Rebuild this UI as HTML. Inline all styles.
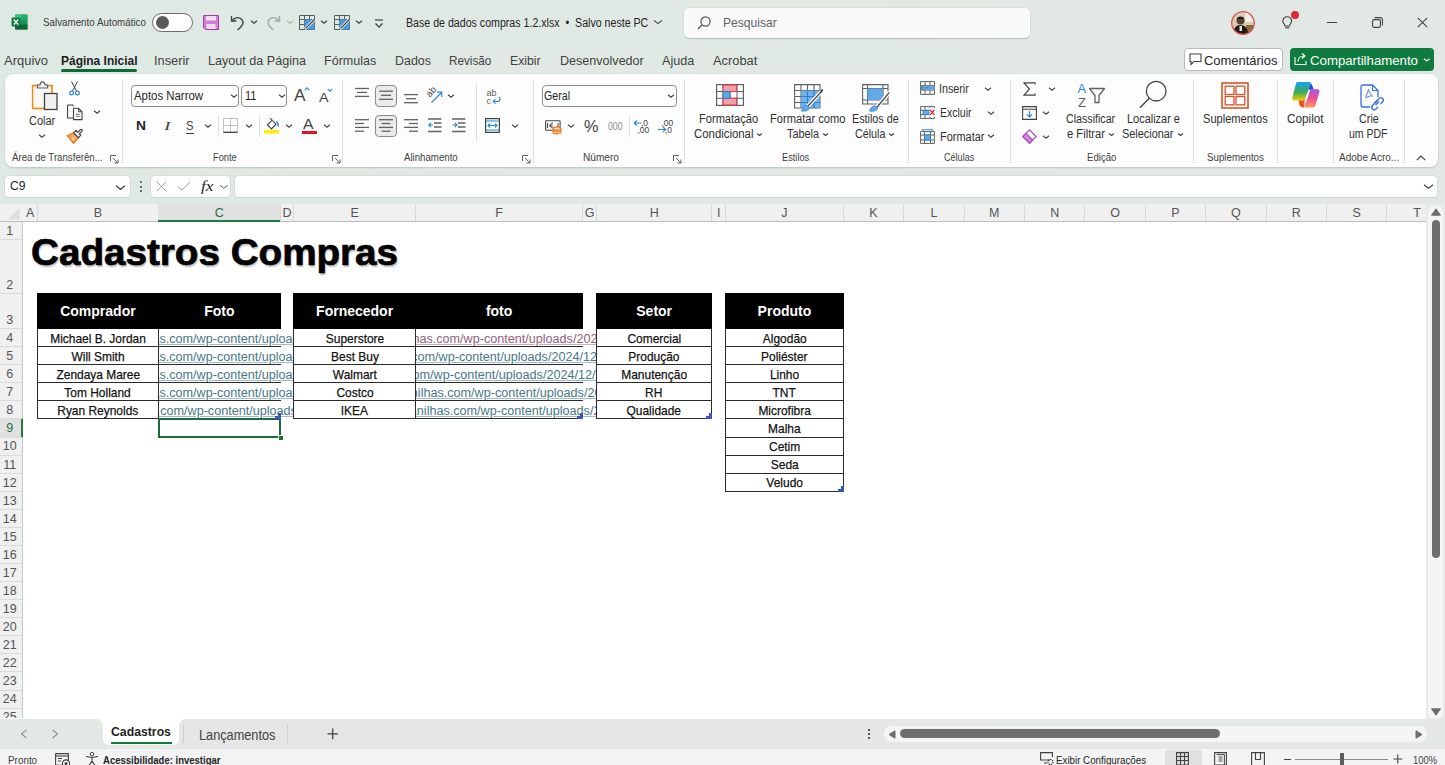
<!DOCTYPE html><html><head><meta charset="utf-8"><style>*{margin:0;padding:0;box-sizing:border-box}
html,body{width:1445px;height:765px;overflow:hidden}
body{position:relative;background:#e0e9e4;font-family:"Liberation Sans",sans-serif;color:#242424}
.a{position:absolute}
.t{position:absolute;white-space:nowrap;line-height:1}
svg{position:absolute;overflow:visible}
.ch{top:207px;font-size:12.5px;text-align:center}
.rh{left:0;width:19.5px;font-size:12.5px;text-align:center}
.ht{font-size:14px;font-weight:bold;color:#fff;text-align:center}
.ht span,.cell span{display:inline-block}
.cell{font-size:13.5px;color:#111;text-align:center;-webkit-text-stroke:0.25px #111}
.cell span{transform:scaleX(0.885)}
.lnk{font-size:12.3px;text-decoration:underline;text-underline-offset:1px}
</style></head><body>
<div class="a" style="left:0;top:0;width:1445px;height:204px;background:linear-gradient(90deg,#dfe9e3 0%,#e0e9e4 45%,#e3e8e6 100%)"></div>
<svg style="left:11px;top:14px" width="17" height="16" viewBox="0 0 17 16"><rect x="4" y="0.5" width="12.5" height="15" rx="1.2" fill="#21a366"/><rect x="4" y="0.5" width="12.5" height="5" fill="#33c481"/><rect x="4" y="10.5" width="12.5" height="5" fill="#185c37"/><rect x="10" y="0.5" width="6.5" height="15" fill="#107c41" opacity="0.35"/><rect x="0.5" y="3.5" width="9" height="9" rx="1" fill="#107c41"/><path d="M2.8 5.5 L7.2 10.5 M7.2 5.5 L2.8 10.5" stroke="#fff" stroke-width="1.3"/></svg>
<div class="t" style="left:43.0px;top:17.29px;font-size:11px;color:#3b3b3b;transform:scaleX(0.8907);transform-origin:0 0;">Salvamento Automático</div>
<div class="a" style="left:152px;top:12.5px;width:41px;height:19.5px;border:1px solid #6b6b6b;border-radius:10px;background:#fff"></div>
<div class="a" style="left:155.5px;top:15.5px;width:13.5px;height:13.5px;border-radius:50%;background:#5c5c5c"></div>
<svg style="left:203px;top:15px" width="16" height="15" viewBox="0 0 16 15"><path d="M0.5 0.5 H15.5 V14.5 H2.5 L0.5 12.5 Z" fill="#d27fd4" /><rect x="3" y="0.5" width="10" height="5" fill="#f3d9f2"/><rect x="3.5" y="9" width="9" height="5.5" fill="#f3d9f2"/><path d="M0.5 0.5 H15.5 V14.5 H2.5 L0.5 12.5 Z" fill="none" stroke="#a13ba0" stroke-width="1"/></svg>
<svg style="left:230px;top:15px" width="15" height="16" viewBox="0 0 15 16"><path d="M1.5 1 V6 H6.5" fill="none" stroke="#424242" stroke-width="1.3"/><path d="M1.8 5.8 C4 2.5 9 1.5 11.8 4.5 C14.5 7.5 12.5 11 7.5 15" fill="none" stroke="#424242" stroke-width="1.3"/></svg>
<svg style="left:250px;top:19px" width="8" height="6" viewBox="0 0 8 6"><path d="M1 1.80 L4.00 4.20 L7.00 1.80" fill="none" stroke="#424242" stroke-width="1.3"/></svg>
<svg style="left:266px;top:15px" width="15" height="16" viewBox="0 0 15 16"><path d="M13.5 1 V6 H8.5" fill="none" stroke="#a8a8a8" stroke-width="1.3"/><path d="M13.2 5.8 C11 2.5 6 1.5 3.2 4.5 C0.5 7.5 2.5 11 7.5 15" fill="none" stroke="#a8a8a8" stroke-width="1.3"/></svg>
<svg style="left:286px;top:19px" width="8" height="6" viewBox="0 0 8 6"><path d="M1 1.80 L4.00 4.20 L7.00 1.80" fill="none" stroke="#b5b5b5" stroke-width="1.1"/></svg>
<svg style="left:299px;top:15px" width="16" height="15" viewBox="0 0 16 15"><path d="M0.5 0.5 H15.5 V14.5 H0.5 Z M0.5 4.5 H15.5 M0.5 9.5 H15.5 M5.5 0.5 V14.5 M10.5 0.5 V14.5" fill="none" stroke="#5a5a5a" stroke-width="1"/><rect x="5.5" y="4.5" width="10" height="10" fill="#4a9be0"/><path d="M6 14 L15 5" stroke="#fff" stroke-width="2.6"/><path d="M6.5 13.5 L15 5" stroke="#3b3b3b" stroke-width="1.1"/></svg>
<svg style="left:320px;top:19px" width="8" height="6" viewBox="0 0 8 6"><path d="M1 1.80 L4.00 4.20 L7.00 1.80" fill="none" stroke="#424242" stroke-width="1.3"/></svg>
<svg style="left:334px;top:15px" width="16" height="15" viewBox="0 0 16 15"><path d="M0.5 0.5 H15.5 V14.5 H0.5 Z M0.5 4.5 H15.5 M0.5 9.5 H15.5 M5.5 0.5 V14.5 M10.5 0.5 V14.5" fill="none" stroke="#5a5a5a" stroke-width="1"/><rect x="5.5" y="4.5" width="10" height="10" fill="#4a9be0"/><path d="M6 14 L15 5" stroke="#fff" stroke-width="2.6"/><path d="M6.5 13.5 L15 5" stroke="#3b3b3b" stroke-width="1.1"/></svg>
<svg style="left:355px;top:19px" width="8" height="6" viewBox="0 0 8 6"><path d="M1 1.80 L4.00 4.20 L7.00 1.80" fill="none" stroke="#424242" stroke-width="1.3"/></svg>
<svg style="left:374px;top:17.5px" width="10" height="12" viewBox="0 0 10 12"><path d="M1 2 H9" stroke="#424242" stroke-width="1.2"/><path d="M1.5 5.5 L5 9 L8.5 5.5" fill="none" stroke="#424242" stroke-width="1.3"/></svg>
<div class="t" style="left:406.3px;top:17.34px;font-size:12px;color:#242424;transform:scaleX(0.8853);transform-origin:0 0;">Base de dados compras 1.2.xlsx&nbsp; •&nbsp; Salvo neste PC</div>
<svg style="left:653px;top:17.5px" width="10" height="8" viewBox="0 0 10 8"><path d="M1 2.40 L5.00 5.60 L9.00 2.40" fill="none" stroke="#424242" stroke-width="1.2"/></svg>
<div class="a" style="left:684px;top:8px;width:346px;height:29.5px;background:#fafafa;border-radius:5px;box-shadow:0 1px 1px rgba(0,0,0,.16),0 0 0 .5px rgba(0,0,0,.06)"></div>
<svg style="left:697px;top:16px" width="14" height="14" viewBox="0 0 14 14"><circle cx="8.5" cy="5.5" r="4.6" fill="none" stroke="#555" stroke-width="1.2"/><path d="M5.2 8.8 L1 13" stroke="#555" stroke-width="1.3"/></svg>
<div class="t" style="left:722.6px;top:16.20px;font-size:13px;color:#616161;transform:scaleX(0.9286);transform-origin:0 0;">Pesquisar</div>
<svg style="left:1231px;top:10.5px" width="24" height="24" viewBox="0 0 24 24"><defs><clipPath id="avc"><circle cx="12" cy="12" r="11"/></clipPath></defs><g clip-path="url(#avc)"><rect width="24" height="24" fill="#d9cdb4"/><rect x="14" y="2" width="8" height="9" fill="#f2eee6"/><rect x="15" y="14" width="7" height="8" fill="#8a6a3a"/><path d="M2 24 C2 17 5 14 9.5 14 C14 14 17 17 17 24 Z" fill="#1e1a18"/><circle cx="9.5" cy="9.5" r="4" fill="#5a4033"/><path d="M6 8 C6 5 13 5 13 8" fill="#231c18"/><rect x="8.5" y="15" width="2.5" height="5" fill="#e8e2da"/></g><circle cx="12" cy="12" r="11.3" fill="none" stroke="#d9534f" stroke-width="1.3"/></svg>
<svg style="left:1282px;top:16px" width="11" height="14" viewBox="0 0 11 14"><path d="M5.2 0.8 C2.5 0.8 0.8 2.8 0.8 5 C0.8 7 2.5 8 3 10 H7.4 C7.9 8 9.6 7 9.6 5 C9.6 2.8 7.9 0.8 5.2 0.8 Z" fill="none" stroke="#424242" stroke-width="1.1"/><path d="M3.3 11.8 H7.1" stroke="#424242" stroke-width="1.2"/></svg>
<div class="a" style="left:1291px;top:11.3px;width:7.6px;height:7.6px;border-radius:50%;background:#dd2c36"></div>
<div class="a" style="left:1327px;top:21.5px;width:10px;height:1.2px;background:#424242"></div>
<svg style="left:1372px;top:17px" width="11" height="11" viewBox="0 0 11 11"><rect x="0.6" y="2.6" width="7.8" height="7.8" rx="1.5" fill="none" stroke="#424242" stroke-width="1.1"/><path d="M2.6 0.6 H8.4 A2 2 0 0 1 10.4 2.6 V8.4" fill="none" stroke="#424242" stroke-width="1.1"/></svg>
<svg style="left:1417px;top:17px" width="11" height="11" viewBox="0 0 11 11"><path d="M0.8 0.8 L10.2 10.2 M10.2 0.8 L0.8 10.2" stroke="#424242" stroke-width="1.1"/></svg>
<div class="t" style="left:4.0px;top:53.80px;font-size:13px;color:#424242;transform:scaleX(0.9979);transform-origin:0 0;">Arquivo</div>
<div class="t" style="left:60.5px;top:53.80px;font-size:13px;color:#1f1f1f;font-weight:bold;transform:scaleX(0.9208);transform-origin:0 0;">Página Inicial</div>
<div class="t" style="left:153.7px;top:53.80px;font-size:13px;color:#424242;transform:scaleX(0.9827);transform-origin:0 0;">Inserir</div>
<div class="t" style="left:207.5px;top:53.80px;font-size:13px;color:#424242;transform:scaleX(0.9690);transform-origin:0 0;">Layout da Página</div>
<div class="t" style="left:324.2px;top:53.80px;font-size:13px;color:#424242;transform:scaleX(0.9652);transform-origin:0 0;">Fórmulas</div>
<div class="t" style="left:394.6px;top:53.80px;font-size:13px;color:#424242;transform:scaleX(0.9576);transform-origin:0 0;">Dados</div>
<div class="t" style="left:449.2px;top:53.80px;font-size:13px;color:#424242;transform:scaleX(0.9024);transform-origin:0 0;">Revisão</div>
<div class="t" style="left:510.0px;top:53.80px;font-size:13px;color:#424242;transform:scaleX(0.9411);transform-origin:0 0;">Exibir</div>
<div class="t" style="left:560.0px;top:53.80px;font-size:13px;color:#424242;transform:scaleX(0.9660);transform-origin:0 0;">Desenvolvedor</div>
<div class="t" style="left:662.4px;top:53.80px;font-size:13px;color:#424242;transform:scaleX(0.9710);transform-origin:0 0;">Ajuda</div>
<div class="t" style="left:713.0px;top:53.80px;font-size:13px;color:#424242;transform:scaleX(0.9886);transform-origin:0 0;">Acrobat</div>
<div class="a" style="left:60.5px;top:69.3px;width:76.5px;height:2.4px;border-radius:1.5px;background:#0e6b35"></div>
<div class="a" style="left:1184px;top:48px;width:98.5px;height:22.5px;background:#fff;border:1px solid #b8b8b8;border-radius:4px"></div>
<svg style="left:1189px;top:53px" width="13" height="13" viewBox="0 0 13 13"><path d="M1 1 H12 V8.5 H5 L2 11.5 V8.5 H1 Z" fill="none" stroke="#424242" stroke-width="1.1"/></svg>
<div class="t" style="left:1203.6px;top:53.50px;font-size:13px;color:#242424;transform:scaleX(0.9957);transform-origin:0 0;">Comentários</div>
<div class="a" style="left:1290px;top:48px;width:144px;height:22.5px;background:#0f7b3f;border-radius:4px"></div>
<svg style="left:1294px;top:52px" width="14" height="14" viewBox="0 0 14 14"><path d="M1 5 V12.5 H12 V9" fill="none" stroke="#fff" stroke-width="1.1"/><path d="M4 9.5 C4 6 6.5 4 10 4 M8 1.5 L11 4 L8 6.5" fill="none" stroke="#fff" stroke-width="1.1"/></svg>
<div class="t" style="left:1310.0px;top:53.50px;font-size:13px;color:#ffffff;transform:scaleX(1.0165);transform-origin:0 0;">Compartilhamento</div>
<svg style="left:1423.2px;top:56.7px" width="7.6" height="5.6" viewBox="0 0 7.6 5.6"><path d="M1 1.68 L3.80 3.92 L6.60 1.68" fill="none" stroke="#ffffff" stroke-width="1.2"/></svg>
<div class="a" style="left:5px;top:74px;width:1432.5px;height:93px;background:#fdfdfd;border-radius:8px;box-shadow:0 1px 2px rgba(0,0,0,.14),0 0 0 .5px rgba(0,0,0,.05)"></div>
<div class="a" style="left:122.0px;top:80px;width:1px;height:83px;background:#e0e0e0"></div>
<div class="a" style="left:342.0px;top:80px;width:1px;height:83px;background:#e0e0e0"></div>
<div class="a" style="left:533.0px;top:80px;width:1px;height:83px;background:#e0e0e0"></div>
<div class="a" style="left:684.2px;top:80px;width:1px;height:83px;background:#e0e0e0"></div>
<div class="a" style="left:908.1px;top:80px;width:1px;height:83px;background:#e0e0e0"></div>
<div class="a" style="left:1009.8px;top:80px;width:1px;height:83px;background:#e0e0e0"></div>
<div class="a" style="left:1193.2px;top:80px;width:1px;height:83px;background:#e0e0e0"></div>
<div class="a" style="left:1277.1px;top:80px;width:1px;height:83px;background:#e0e0e0"></div>
<div class="a" style="left:1332.5px;top:80px;width:1px;height:83px;background:#e0e0e0"></div>
<div class="a" style="left:1403.9px;top:80px;width:1px;height:83px;background:#e0e0e0"></div>
<div class="t" style="left:12.2px;top:153.23px;font-size:10px;color:#3d3d3d;transform:scaleX(0.9664);transform-origin:0 0;">Área de Transferên...</div>
<svg style="left:110px;top:155px" width="9" height="9" viewBox="0 0 9 9"><path d="M0.5 6 V0.5 H6" fill="none" stroke="#616161" stroke-width="1"/><path d="M3 3 L8 8 M4.5 8 H8 V4.5" fill="none" stroke="#616161" stroke-width="1"/></svg>
<div class="t" style="left:212.7px;top:153.23px;font-size:10px;color:#3d3d3d;transform:scaleX(0.9305);transform-origin:0 0;">Fonte</div>
<svg style="left:332px;top:155px" width="9" height="9" viewBox="0 0 9 9"><path d="M0.5 6 V0.5 H6" fill="none" stroke="#616161" stroke-width="1"/><path d="M3 3 L8 8 M4.5 8 H8 V4.5" fill="none" stroke="#616161" stroke-width="1"/></svg>
<div class="t" style="left:403.7px;top:153.23px;font-size:10px;color:#3d3d3d;transform:scaleX(0.9659);transform-origin:0 0;">Alinhamento</div>
<svg style="left:522px;top:155px" width="9" height="9" viewBox="0 0 9 9"><path d="M0.5 6 V0.5 H6" fill="none" stroke="#616161" stroke-width="1"/><path d="M3 3 L8 8 M4.5 8 H8 V4.5" fill="none" stroke="#616161" stroke-width="1"/></svg>
<div class="t" style="left:583.0px;top:153.23px;font-size:10px;color:#3d3d3d;transform:scaleX(1.0123);transform-origin:0 0;">Número</div>
<svg style="left:673px;top:155px" width="9" height="9" viewBox="0 0 9 9"><path d="M0.5 6 V0.5 H6" fill="none" stroke="#616161" stroke-width="1"/><path d="M3 3 L8 8 M4.5 8 H8 V4.5" fill="none" stroke="#616161" stroke-width="1"/></svg>
<div class="t" style="left:782.4px;top:153.23px;font-size:10px;color:#3d3d3d;transform:scaleX(0.9235);transform-origin:0 0;">Estilos</div>
<div class="t" style="left:943.8px;top:153.23px;font-size:10px;color:#3d3d3d;transform:scaleX(0.9057);transform-origin:0 0;">Células</div>
<div class="t" style="left:1086.6px;top:153.23px;font-size:10px;color:#3d3d3d;transform:scaleX(0.9615);transform-origin:0 0;">Edição</div>
<div class="t" style="left:1206.7px;top:153.23px;font-size:10px;color:#3d3d3d;transform:scaleX(0.9747);transform-origin:0 0;">Suplementos</div>
<div class="t" style="left:1338.6px;top:153.23px;font-size:10px;color:#3d3d3d;transform:scaleX(1.0023);transform-origin:0 0;">Adobe Acro...</div>
<svg style="left:1416px;top:155px" width="10" height="6" viewBox="0 0 10 6"><path d="M0.8 5.2 L5 1 L9.2 5.2" fill="none" stroke="#424242" stroke-width="1.2"/></svg>
<div class="a" style="left:5px;top:176px;width:125px;height:21px;background:#fff;border-radius:4px;box-shadow:0 0 0 .6px #d0d0d0, 0 .6px 1px rgba(0,0,0,.08)"></div>
<div class="t" style="left:10.0px;top:180.42px;font-size:12.5px;color:#242424;transform:scaleX(0.9697);transform-origin:0 0;">C9</div>
<svg style="left:114.5px;top:182.5px" width="11.0" height="9.0" viewBox="0 0 11.0 9.0"><path d="M1 2.70 L5.50 6.30 L10.00 2.70" fill="none" stroke="#424242" stroke-width="1.3"/></svg>
<div class="a" style="left:139.5px;top:181px;width:2.4px;height:2.4px;border-radius:50%;background:#424242"></div>
<div class="a" style="left:139.5px;top:185.5px;width:2.4px;height:2.4px;border-radius:50%;background:#424242"></div>
<div class="a" style="left:139.5px;top:190px;width:2.4px;height:2.4px;border-radius:50%;background:#424242"></div>
<div class="a" style="left:151px;top:176px;width:79px;height:21px;background:#fff;border-radius:4px;box-shadow:0 0 0 .6px #d0d0d0, 0 .6px 1px rgba(0,0,0,.08)"></div>
<svg style="left:156px;top:181px" width="11" height="11" viewBox="0 0 11 11"><path d="M0.8 0.8 L10.2 10.2 M10.2 0.8 L0.8 10.2" stroke="#a0a0a0" stroke-width="1"/></svg>
<svg style="left:177px;top:181px" width="14" height="10" viewBox="0 0 14 10"><path d="M0.8 5.5 L4.8 9.2 L13.2 0.8" fill="none" stroke="#a0a0a0" stroke-width="1"/></svg>
<div class="t" style="left:201.0px;top:179.65px;font-size:14px;color:#242424;transform:scaleX(1.2396);transform-origin:0 0;font-family:'Liberation Serif',serif"><i>fx</i></div>
<svg style="left:219.2px;top:183.2px" width="9.6" height="7.6" viewBox="0 0 9.6 7.6"><path d="M1 2.28 L4.80 5.32 L8.60 2.28" fill="none" stroke="#555" stroke-width="1"/></svg>
<div class="a" style="left:235px;top:176px;width:1202px;height:21px;background:#fff;border-radius:4px;box-shadow:0 0 0 .6px #d0d0d0, 0 .6px 1px rgba(0,0,0,.08)"></div>
<svg style="left:1422.5px;top:181.5px" width="11.0" height="9.0" viewBox="0 0 11.0 9.0"><path d="M1 2.70 L5.50 6.30 L10.00 2.70" fill="none" stroke="#424242" stroke-width="1.2"/></svg>
<svg style="left:31px;top:81px" width="27" height="30" viewBox="0 0 27 30"><path d="M2 5 H7 M17 5 H21 V16" fill="none" stroke="#e8891a" stroke-width="1.3"/><path d="M1.5 4.5 H21 V27.5 H1.5 Z" fill="#fbe8cf" stroke="#e8891a" stroke-width="1.3"/><rect x="3.5" y="6.5" width="15.5" height="19" fill="#fafafa"/><path d="M6.5 7 V4 H9 C9 1.5 10.5 0.8 11.5 0.8 C12.5 0.8 14 1.5 14 4 H16.5 V7 Z" fill="#f5f5f5" stroke="#616161" stroke-width="1.2"/><rect x="13.5" y="12.5" width="12.5" height="16" fill="#f0f0f0" stroke="#424242" stroke-width="1.3"/></svg>
<div class="t" style="left:28.8px;top:115.19px;font-size:12.3px;color:#303030;transform:scaleX(0.8914);transform-origin:0 0;">Colar</div>
<svg style="left:38px;top:132.5px" width="8" height="6" viewBox="0 0 8 6"><path d="M1 1.80 L4.00 4.20 L7.00 1.80" fill="none" stroke="#424242" stroke-width="1.1"/></svg>
<svg style="left:69px;top:81px" width="11" height="15" viewBox="0 0 11 15"><path d="M2.5 0.5 L7.5 10 M8.5 0.5 L3.5 10" stroke="#424242" stroke-width="1"/><circle cx="2.6" cy="12" r="1.9" fill="none" stroke="#2a8ad4" stroke-width="1.2"/><circle cx="8.4" cy="12" r="1.9" fill="none" stroke="#2a8ad4" stroke-width="1.2"/></svg>
<svg style="left:67px;top:104px" width="16" height="17" viewBox="0 0 16 17"><path d="M0.6 1 H5.5 L6.5 2 M0.6 1 V14 H6" fill="none" stroke="#424242" stroke-width="1.1"/><path d="M6.5 4.3 H11.5 L15 7.8 V15.6 H6.5 Z" fill="#fff" stroke="#424242" stroke-width="1.1"/><path d="M11.5 4.3 V7.8 H15" fill="none" stroke="#424242" stroke-width="1"/><path d="M8.8 10.3 H12.8 M8.8 12.3 H12.8" stroke="#616161" stroke-width=".9"/></svg>
<svg style="left:93px;top:109px" width="8" height="6" viewBox="0 0 8 6"><path d="M1 1.80 L4.00 4.20 L7.00 1.80" fill="none" stroke="#424242" stroke-width="1.1"/></svg>
<svg style="left:66px;top:128px" width="17" height="17" viewBox="0 0 17 17"><path d="M1.2 7.7 L7.5 4.8 L12.6 9.9 L7.5 15.3 Z" fill="#f4a65a" stroke="#e8741a" stroke-width="1.2" stroke-linejoin="round"/><path d="M5 10.5 L8.5 9 L8 12.5 Z" fill="#fde6cc"/><path d="M7.6 4.6 L10 2.4 L14.8 7.2 L12.6 9.6 Z" fill="#fff" stroke="#424242" stroke-width="1.2" stroke-linejoin="round"/><path d="M11.2 4.8 L14.2 1.8 C14.8 1.2 15.6 1.2 16 1.6 C16.4 2 16.4 2.8 15.8 3.4 L12.8 6.4" fill="#fff" stroke="#424242" stroke-width="1.2"/></svg>
<div class="a" style="left:131px;top:84.5px;width:108px;height:22px;border:1px solid #8f8f8f;border-radius:4px;background:#fff"></div>
<div class="t" style="left:133.5px;top:90.04px;font-size:12px;color:#242424;transform:scaleX(0.9493);transform-origin:0 0;">Aptos Narrow</div>
<svg style="left:229.5px;top:92.5px" width="8" height="6" viewBox="0 0 8 6"><path d="M1 1.80 L4.00 4.20 L7.00 1.80" fill="none" stroke="#424242" stroke-width="1.2"/></svg>
<div class="a" style="left:241px;top:84.5px;width:46px;height:22px;border:1px solid #8f8f8f;border-radius:4px;background:#fff"></div>
<div class="t" style="left:244.5px;top:90.04px;font-size:12px;color:#242424;transform:scaleX(0.9235);transform-origin:0 0;">11</div>
<svg style="left:277.5px;top:92.5px" width="8" height="6" viewBox="0 0 8 6"><path d="M1 1.80 L4.00 4.20 L7.00 1.80" fill="none" stroke="#424242" stroke-width="1.2"/></svg>
<div class="t" style="left:293.5px;top:87.96px;font-size:16px;color:#424242;transform:scaleX(1.0776);transform-origin:0 0;">A</div>
<svg style="left:304px;top:87px" width="6" height="4" viewBox="0 0 6 4"><path d="M0.7 3.3 L3 0.9 L5.3 3.3" fill="none" stroke="#2a8ad4" stroke-width="1.1"/></svg>
<div class="t" style="left:319.0px;top:90.50px;font-size:13px;color:#424242;transform:scaleX(1.0955);transform-origin:0 0;">A</div>
<svg style="left:327px;top:88px" width="6" height="4" viewBox="0 0 6 4"><path d="M0.7 0.8 L3 3.1 L5.3 0.8" fill="none" stroke="#2a8ad4" stroke-width="1.1"/></svg>
<div class="t" style="left:136.3px;top:119.37px;font-size:13.5px;color:#242424;font-weight:bold;transform:scaleX(1.0256);transform-origin:0 0;">N</div>
<div class="t" style="left:163.5px;top:119.37px;font-size:13.5px;color:#424242;transform:scaleX(1.4667);transform-origin:0 0;font-family:'Liberation Serif',serif;font-style:italic">I</div>
<div class="t" style="left:186.0px;top:120.22px;font-size:12.5px;color:#424242;transform:scaleX(0.8989);transform-origin:0 0;">S</div>
<div class="a" style="left:185.5px;top:132.5px;width:8.5px;height:1.1px;background:#424242"></div>
<svg style="left:203.5px;top:123px" width="8" height="6" viewBox="0 0 8 6"><path d="M1 1.80 L4.00 4.20 L7.00 1.80" fill="none" stroke="#424242" stroke-width="1.1"/></svg>
<div class="a" style="left:217.5px;top:115px;width:1px;height:22px;background:#e0e0e0"></div>
<svg style="left:223px;top:118px" width="15" height="15" viewBox="0 0 15 15"><path d="M0.5 0.5 H14.5 V14.5 H0.5 Z M7.5 0.5 V14.5 M0.5 7.5 H14.5" fill="none" stroke="#8a8a8a" stroke-width="1" stroke-dasharray="1 1"/><path d="M0.5 14.3 H14.5" stroke="#424242" stroke-width="1.3"/></svg>
<svg style="left:244.5px;top:123px" width="8" height="6" viewBox="0 0 8 6"><path d="M1 1.80 L4.00 4.20 L7.00 1.80" fill="none" stroke="#424242" stroke-width="1.1"/></svg>
<div class="a" style="left:258.5px;top:115px;width:1px;height:22px;background:#e0e0e0"></div>
<svg style="left:264px;top:117px" width="16" height="17" viewBox="0 0 16 17"><path d="M3.5 8 L8 3.2 L12 7.2 L7.5 12 Z" fill="#fff" stroke="#424242" stroke-width="1.1"/><path d="M8 3.2 L6 1" stroke="#424242" stroke-width="1.1"/><path d="M12.5 4.5 C14 6 14.5 8 14 9.5" fill="none" stroke="#2a8ad4" stroke-width="1.3"/><rect x="0" y="13" width="15" height="3.5" fill="#ffef00"/></svg>
<svg style="left:285px;top:123px" width="8" height="6" viewBox="0 0 8 6"><path d="M1 1.80 L4.00 4.20 L7.00 1.80" fill="none" stroke="#424242" stroke-width="1.1"/></svg>
<div class="t" style="left:302.5px;top:116.53px;font-size:14.5px;color:#424242;transform:scaleX(1.0856);transform-origin:0 0;">A</div>
<div class="a" style="left:302px;top:130.5px;width:15px;height:3.5px;background:#e81123"></div>
<svg style="left:323px;top:123px" width="8" height="6" viewBox="0 0 8 6"><path d="M1 1.80 L4.00 4.20 L7.00 1.80" fill="none" stroke="#424242" stroke-width="1.1"/></svg>
<svg style="left:355px;top:0px" width="14" height="200" viewBox="0 0 14 200"><path d="M0.00 88.50 H14.00" stroke="#616161" stroke-width="1.3"/><path d="M2.00 92.40 H12.00" stroke="#616161" stroke-width="1.3"/><path d="M0.00 96.40 H14.00" stroke="#616161" stroke-width="1.3"/></svg>
<div class="a" style="left:375px;top:84.5px;width:22px;height:22px;border:1px solid #8a8a8a;border-radius:4px;background:#ebebeb"></div>
<svg style="left:379px;top:0px" width="14" height="200" viewBox="0 0 14 200"><path d="M0.00 91.20 H14.00" stroke="#616161" stroke-width="1.3"/><path d="M2.00 95.30 H12.00" stroke="#616161" stroke-width="1.3"/><path d="M0.00 99.30 H14.00" stroke="#616161" stroke-width="1.3"/></svg>
<svg style="left:404px;top:0px" width="14" height="200" viewBox="0 0 14 200"><path d="M0.00 94.60 H14.00" stroke="#616161" stroke-width="1.3"/><path d="M2.00 98.70 H12.00" stroke="#616161" stroke-width="1.3"/><path d="M0.00 102.70 H14.00" stroke="#616161" stroke-width="1.3"/></svg>
<svg style="left:426px;top:86px" width="17" height="18" viewBox="0 0 17 18"><text x="0" y="9" font-size="9.5" font-family="Liberation Sans" fill="#424242" transform="rotate(-50 5 6)">ab</text><path d="M5.5 16.5 L15.5 6.5 M11 6.2 H15.7 V11" fill="none" stroke="#2a8ad4" stroke-width="1.2"/></svg>
<svg style="left:446.5px;top:93px" width="8" height="6" viewBox="0 0 8 6"><path d="M1 1.80 L4.00 4.20 L7.00 1.80" fill="none" stroke="#424242" stroke-width="1.1"/></svg>
<svg style="left:355px;top:0px" width="14" height="200" viewBox="0 0 14 200"><path d="M0.00 119.70 H14.00" stroke="#616161" stroke-width="1.3"/><path d="M0.00 123.50 H9.00" stroke="#616161" stroke-width="1.3"/><path d="M0.00 127.40 H14.00" stroke="#616161" stroke-width="1.3"/><path d="M0.00 131.20 H9.00" stroke="#616161" stroke-width="1.3"/></svg>
<div class="a" style="left:375px;top:114.5px;width:22px;height:22px;border:1px solid #8a8a8a;border-radius:4px;background:#ebebeb"></div>
<svg style="left:379px;top:0px" width="14" height="200" viewBox="0 0 14 200"><path d="M0.00 119.70 H14.00" stroke="#616161" stroke-width="1.3"/><path d="M2.50 123.50 H11.50" stroke="#616161" stroke-width="1.3"/><path d="M0.00 127.40 H14.00" stroke="#616161" stroke-width="1.3"/><path d="M2.50 131.20 H11.50" stroke="#616161" stroke-width="1.3"/></svg>
<svg style="left:404px;top:0px" width="14" height="200" viewBox="0 0 14 200"><path d="M0.00 119.70 H14.00" stroke="#616161" stroke-width="1.3"/><path d="M5.00 123.50 H14.00" stroke="#616161" stroke-width="1.3"/><path d="M0.00 127.40 H14.00" stroke="#616161" stroke-width="1.3"/><path d="M5.00 131.20 H14.00" stroke="#616161" stroke-width="1.3"/></svg>
<svg style="left:428px;top:118px" width="14" height="15" viewBox="0 0 14 15"><path d="M0 1 H13.5 M6 5 H13.5 M6 9 H13.5 M0 13.5 H13.5" stroke="#616161" stroke-width="1.3"/><path d="M5 7 H0.8 M3 4.8 L0.8 7 L3 9.2" fill="none" stroke="#2a8ad4" stroke-width="1.2"/></svg>
<svg style="left:452px;top:118px" width="14" height="15" viewBox="0 0 14 15"><path d="M0 1 H13.5 M6 5 H13.5 M6 9 H13.5 M0 13.5 H13.5" stroke="#616161" stroke-width="1.3"/><path d="M0.5 7 H5 M2.8 4.8 L5 7 L2.8 9.2" fill="none" stroke="#2a8ad4" stroke-width="1.2"/></svg>
<div class="a" style="left:475.5px;top:84px;width:1px;height:58px;background:#e0e0e0"></div>
<svg style="left:486px;top:88px" width="16" height="17" viewBox="0 0 16 17"><text x="0.5" y="8" font-size="9" font-family="Liberation Sans" fill="#616161">ab</text><text x="0.5" y="15.5" font-size="9" font-family="Liberation Sans" fill="#616161">c</text><path d="M13 9 C14.5 10 14.5 13 12 13.5 H7.5 M9.5 11.3 L7.3 13.5 L9.5 15.7" fill="none" stroke="#2a8ad4" stroke-width="1.2"/></svg>
<svg style="left:485px;top:118px" width="15" height="15" viewBox="0 0 15 15"><path d="M0.6 0.6 H14.4 V14.4 H0.6 Z" fill="none" stroke="#424242" stroke-width="1.2"/><path d="M0.6 3 H14.4 M0.6 12 H14.4" stroke="#2a8ad4" stroke-width="1.2"/><path d="M3 7.5 H12 M5 5.5 L3 7.5 L5 9.5 M10 5.5 L12 7.5 L10 9.5" fill="none" stroke="#2a8ad4" stroke-width="1.1"/></svg>
<svg style="left:510.5px;top:123px" width="8" height="6" viewBox="0 0 8 6"><path d="M1 1.80 L4.00 4.20 L7.00 1.80" fill="none" stroke="#424242" stroke-width="1.1"/></svg>
<div class="a" style="left:541.5px;top:84.5px;width:135.5px;height:22px;border:1px solid #8f8f8f;border-radius:4px;background:#fff"></div>
<div class="t" style="left:544.0px;top:89.84px;font-size:12px;color:#242424;transform:scaleX(0.8860);transform-origin:0 0;">Geral</div>
<svg style="left:667px;top:92.5px" width="8" height="6" viewBox="0 0 8 6"><path d="M1 1.80 L4.00 4.20 L7.00 1.80" fill="none" stroke="#424242" stroke-width="1.2"/></svg>
<svg style="left:545px;top:120px" width="17" height="15" viewBox="0 0 17 15"><rect x="0.6" y="0.8" width="14.5" height="9.5" rx=".8" fill="#fff" stroke="#424242" stroke-width="1.1"/><path d="M2.5 3 V8 M13 3 V8" stroke="#424242" stroke-width="1"/><path d="M8 3.2 C6 3 5 4.2 5 5.5 C5 6.8 6 8 8 7.8 M4.5 5 H7.5 M4.5 6.2 H7.5" fill="none" stroke="#424242" stroke-width=".9"/><path d="M8 8.5 V12.8 C8 14.2 15.8 14.2 15.8 12.8 V8.5" fill="#fbd7b0" stroke="#e8741a" stroke-width="1.1"/><ellipse cx="11.9" cy="8.5" rx="3.9" ry="1.6" fill="#fbd7b0" stroke="#e8741a" stroke-width="1.1"/><path d="M8 10.7 C8 12 15.8 12 15.8 10.7" fill="none" stroke="#e8741a" stroke-width="1"/></svg>
<svg style="left:566.5px;top:123px" width="8" height="6" viewBox="0 0 8 6"><path d="M1 1.80 L4.00 4.20 L7.00 1.80" fill="none" stroke="#424242" stroke-width="1.1"/></svg>
<div class="t" style="left:583.5px;top:118.11px;font-size:17px;color:#424242;transform:scaleX(0.9597);transform-origin:0 0;">%</div>
<div class="t" style="left:607.5px;top:121.11px;font-size:10.5px;color:#8a8a8a;transform:scaleX(0.8271);transform-origin:0 0;">000</div>
<div class="a" style="left:628.5px;top:115px;width:1px;height:22px;background:#e0e0e0"></div>
<svg style="left:633px;top:118px" width="17" height="16" viewBox="0 0 17 16"><text x="8" y="7.5" font-size="8.5" font-family="Liberation Sans" fill="#424242">,0</text><text x="4.5" y="15" font-size="8.5" font-family="Liberation Sans" fill="#424242">,00</text><path d="M8.5 5 H1.3 M3.8 2.5 L1.3 5 L3.8 7.5" fill="none" stroke="#2a8ad4" stroke-width="1.2"/></svg>
<svg style="left:657px;top:118px" width="17" height="16" viewBox="0 0 17 16"><text x="4.5" y="7.5" font-size="8.5" font-family="Liberation Sans" fill="#424242">,00</text><text x="8" y="15" font-size="8.5" font-family="Liberation Sans" fill="#424242">,0</text><path d="M1 11.5 H8.5 M6 9 L8.5 11.5 L6 14" fill="none" stroke="#2a8ad4" stroke-width="1.2"/></svg>
<svg style="left:716px;top:84px" width="28" height="22" viewBox="0 0 28 22"><rect x="0.6" y="0.6" width="26.8" height="20.8" fill="#fff" stroke="#616161" stroke-width="1.2"/><path d="M7 0.6 V21.4 M14 0.6 V21.4 M21 0.6 V21.4 M0.6 7.5 H27.4 M0.6 14.3 H27.4" stroke="#616161" stroke-width="1" fill="none"/><rect x="7" y="1" width="13.5" height="6.5" fill="#f4a0a8" stroke="#e03c4b" stroke-width="1.1"/><rect x="7" y="14.3" width="13.5" height="6.7" fill="#f4a0a8" stroke="#e03c4b" stroke-width="1.1"/><rect x="7" y="7.5" width="7" height="6.8" fill="#62a8e8" stroke="#2a7fc7" stroke-width="1"/></svg>
<div class="t" style="left:699.3px;top:113.39px;font-size:12.3px;color:#303030;transform:scaleX(0.9017);transform-origin:0 0;">Formatação</div>
<div class="t" style="left:694.0px;top:128.19px;font-size:12.3px;color:#303030;transform:scaleX(0.9254);transform-origin:0 0;">Condicional</div>
<svg style="left:756.3px;top:132.0px" width="7.0" height="5.0" viewBox="0 0 7.0 5.0"><path d="M1 1.50 L3.50 3.50 L6.00 1.50" fill="none" stroke="#424242" stroke-width="1.1"/></svg>
<svg style="left:794px;top:84px" width="30" height="28" viewBox="0 0 30 28"><path d="M0.6 0.6 H26 V24 H0.6 Z M0.6 6.5 H26 M0.6 12.5 H26 M0.6 18.5 H26 M7 0.6 V24 M13.5 0.6 V24 M20 0.6 V24" fill="none" stroke="#616161" stroke-width="1.1"/><rect x="7" y="6.5" width="19" height="17.5" fill="#62a8e8" opacity="0.9"/><path d="M7 12.5 H26 M7 18.5 H26 M13.5 6.5 V24 M20 6.5 V24" stroke="#2f7fd0" stroke-width="1"/><path d="M13 23 L27.5 7.5" stroke="#fff" stroke-width="4"/><path d="M14 22 L27.2 7.8" stroke="#424242" stroke-width="1.2" fill="none"/><path d="M29 6 L26 9 M28.5 5.5 L26.5 7.5" stroke="#424242" stroke-width="1.2"/><path d="M7.5 27 C8.5 23 11 21 13.5 21.5 L15.5 23.5 C15.5 26 12.5 27.5 7.5 27 Z" fill="#62a8e8" stroke="#2f7fd0" stroke-width=".8"/></svg>
<div class="t" style="left:769.9px;top:113.39px;font-size:12.3px;color:#303030;transform:scaleX(0.9050);transform-origin:0 0;">Formatar como</div>
<div class="t" style="left:787.0px;top:128.19px;font-size:12.3px;color:#303030;transform:scaleX(0.8824);transform-origin:0 0;">Tabela</div>
<svg style="left:821.5px;top:132.0px" width="7.0" height="5.0" viewBox="0 0 7.0 5.0"><path d="M1 1.50 L3.50 3.50 L6.00 1.50" fill="none" stroke="#424242" stroke-width="1.1"/></svg>
<svg style="left:862px;top:84px" width="30" height="28" viewBox="0 0 30 28"><path d="M0.6 0.6 H26 V20 H0.6 Z M0.6 4.5 H26 M0.6 16 H26 M5.5 0.6 V20 M21 0.6 V20" fill="none" stroke="#616161" stroke-width="1.1"/><rect x="5.5" y="4.5" width="15.5" height="11.5" fill="#62a8e8"/><path d="M14 24.5 L27.5 8" stroke="#fff" stroke-width="4"/><path d="M14.8 23.5 L27.3 8.3" stroke="#424242" stroke-width="1.2" fill="none"/><path d="M7.5 27 C8.5 23 11 21.5 13.5 22 L15.5 24 C15.5 26.5 12.5 27.8 7.5 27 Z" fill="#62a8e8" stroke="#2f7fd0" stroke-width=".8"/></svg>
<div class="t" style="left:852.0px;top:113.39px;font-size:12.3px;color:#303030;transform:scaleX(0.8752);transform-origin:0 0;">Estilos de</div>
<div class="t" style="left:854.6px;top:128.19px;font-size:12.3px;color:#303030;transform:scaleX(0.8717);transform-origin:0 0;">Célula</div>
<svg style="left:887.5px;top:132.0px" width="7.0" height="5.0" viewBox="0 0 7.0 5.0"><path d="M1 1.50 L3.50 3.50 L6.00 1.50" fill="none" stroke="#424242" stroke-width="1.1"/></svg>
<svg style="left:920px;top:81px" width="15" height="14" viewBox="0 0 15 14"><path d="M0.6 0.6 H14.4 V13.4 H0.6 Z M0.6 4.6 H14.4 M0.6 9 H14.4 M5 0.6 V13.4 M10 0.6 V13.4" fill="none" stroke="#616161" stroke-width="1"/><rect x="6" y="4.6" width="8.4" height="4.4" fill="#62a8e8"/><path d="M8 6.8 H1.2 M3.7 4.3 L1.2 6.8 L3.7 9.3" fill="none" stroke="#2a8ad4" stroke-width="1.3"/></svg>
<div class="t" style="left:939.2px;top:82.59px;font-size:12.3px;color:#303030;transform:scaleX(0.8717);transform-origin:0 0;">Inserir</div>
<svg style="left:984.2px;top:85.5px" width="8" height="6" viewBox="0 0 8 6"><path d="M1 1.80 L4.00 4.20 L7.00 1.80" fill="none" stroke="#424242" stroke-width="1.1"/></svg>
<svg style="left:920px;top:106px" width="16" height="13" viewBox="0 0 16 13"><path d="M0.6 0.6 H14.4 V12.4 H0.6 Z M0.6 4.3 H14.4 M0.6 8.6 H14.4 M5 0.6 V12.4 M10 0.6 V12.4" fill="none" stroke="#616161" stroke-width="1"/><rect x="3" y="4.3" width="6" height="4.3" fill="#62a8e8" stroke="#2a7fc7" stroke-width=".8"/><rect x="9.5" y="2" width="5.5" height="9" fill="#fff"/><path d="M10 3.8 L14.5 8.8 M14.5 3.8 L10 8.8" stroke="#e81123" stroke-width="1.2"/></svg>
<div class="t" style="left:939.5px;top:106.59px;font-size:12.3px;color:#303030;transform:scaleX(0.8532);transform-origin:0 0;">Excluir</div>
<svg style="left:986.5px;top:109.5px" width="8" height="6" viewBox="0 0 8 6"><path d="M1 1.80 L4.00 4.20 L7.00 1.80" fill="none" stroke="#424242" stroke-width="1.1"/></svg>
<svg style="left:920px;top:129px" width="15" height="15" viewBox="0 0 15 15"><path d="M0.6 2.6 H14.4 V14.4 H0.6 Z M0.6 6 H14.4 M0.6 11 H14.4 M4.5 2.6 V14.4 M10.5 2.6 V14.4" fill="none" stroke="#616161" stroke-width="1"/><rect x="4.5" y="6" width="6" height="5" fill="#62a8e8" stroke="#2a7fc7" stroke-width=".8"/><path d="M2.5 0.8 H12.5 M2.5 0 V1.6 M12.5 0 V1.6" stroke="#2a8ad4" stroke-width="1"/></svg>
<div class="t" style="left:939.5px;top:130.69px;font-size:12.3px;color:#303030;transform:scaleX(0.8917);transform-origin:0 0;">Formatar</div>
<svg style="left:986.5px;top:133px" width="8" height="6" viewBox="0 0 8 6"><path d="M1 1.80 L4.00 4.20 L7.00 1.80" fill="none" stroke="#424242" stroke-width="1.1"/></svg>
<svg style="left:1023px;top:81.5px" width="13" height="14" viewBox="0 0 13 14"><path d="M12 2.5 V0.8 H1 L6.5 7 L1 13.2 H12 V11.5" fill="none" stroke="#424242" stroke-width="1.2"/></svg>
<svg style="left:1047.5px;top:85.5px" width="8" height="6" viewBox="0 0 8 6"><path d="M1 1.80 L4.00 4.20 L7.00 1.80" fill="none" stroke="#424242" stroke-width="1.1"/></svg>
<svg style="left:1022px;top:105.5px" width="15" height="14" viewBox="0 0 15 14"><path d="M0.6 0.6 H14.4 V13.4 H0.6 Z M0.6 3.2 H14.4" fill="none" stroke="#424242" stroke-width="1.1"/><path d="M7.5 5 V11 M5 8.5 L7.5 11 L10 8.5" fill="none" stroke="#2a8ad4" stroke-width="1.2"/></svg>
<svg style="left:1041.5px;top:109.5px" width="8" height="6" viewBox="0 0 8 6"><path d="M1 1.80 L4.00 4.20 L7.00 1.80" fill="none" stroke="#424242" stroke-width="1.1"/></svg>
<svg style="left:1022px;top:129px" width="15" height="15" viewBox="0 0 15 15"><path d="M7.5 0.8 L14.2 7.5 L7.5 14.2 L0.8 7.5 Z" fill="#fff" stroke="#b146c2" stroke-width="1.2"/><path d="M4 4.3 L10.7 11 L7.5 14.2 L0.8 7.5 Z" fill="#d08bd9" stroke="#b146c2" stroke-width="1.1"/></svg>
<svg style="left:1041.5px;top:133.5px" width="8" height="6" viewBox="0 0 8 6"><path d="M1 1.80 L4.00 4.20 L7.00 1.80" fill="none" stroke="#424242" stroke-width="1.1"/></svg>
<svg style="left:1077px;top:82px" width="30" height="26" viewBox="0 0 30 26"><text x="0.5" y="11.2" font-size="13" font-family="Liberation Sans" fill="#2a8ad4">A</text><text x="1" y="25" font-size="13" font-family="Liberation Sans" fill="#616161">Z</text><path d="M12.5 6.5 H27.5 L22 13.5 V20.5 H18 V13.5 Z" fill="none" stroke="#616161" stroke-width="1.3" stroke-linejoin="round"/></svg>
<div class="t" style="left:1066.4px;top:113.39px;font-size:12.3px;color:#303030;transform:scaleX(0.8670);transform-origin:0 0;">Classificar</div>
<div class="t" style="left:1067.0px;top:128.19px;font-size:12.3px;color:#303030;transform:scaleX(0.9112);transform-origin:0 0;">e Filtrar</div>
<svg style="left:1108.0px;top:132.0px" width="7.0" height="5.0" viewBox="0 0 7.0 5.0"><path d="M1 1.50 L3.50 3.50 L6.00 1.50" fill="none" stroke="#424242" stroke-width="1.1"/></svg>
<svg style="left:1139px;top:80px" width="28" height="30" viewBox="0 0 28 30"><circle cx="17.2" cy="11.2" r="9.8" fill="none" stroke="#424242" stroke-width="1.3"/><path d="M10.2 18.2 L1 27.8" stroke="#424242" stroke-width="1.4"/></svg>
<div class="t" style="left:1126.5px;top:113.39px;font-size:12.3px;color:#303030;transform:scaleX(0.8905);transform-origin:0 0;">Localizar e</div>
<div class="t" style="left:1121.5px;top:128.19px;font-size:12.3px;color:#303030;transform:scaleX(0.8858);transform-origin:0 0;">Selecionar</div>
<svg style="left:1176.5px;top:132.0px" width="7.0" height="5.0" viewBox="0 0 7.0 5.0"><path d="M1 1.50 L3.50 3.50 L6.00 1.50" fill="none" stroke="#424242" stroke-width="1.1"/></svg>
<svg style="left:1221px;top:81.5px" width="28" height="27" viewBox="0 0 28 27"><rect x="1" y="1" width="26" height="25" fill="none" stroke="#d8542a" stroke-width="1.6"/><rect x="4.2" y="4.2" width="8.8" height="8.3" fill="none" stroke="#d8542a" stroke-width="1.3"/><rect x="15" y="4.2" width="8.8" height="8.3" fill="none" stroke="#d8542a" stroke-width="1.3"/><rect x="4.2" y="14.5" width="8.8" height="8.3" fill="none" stroke="#d8542a" stroke-width="1.3"/><rect x="15" y="14.5" width="8.8" height="8.3" fill="none" stroke="#d8542a" stroke-width="1.3"/></svg>
<div class="t" style="left:1203.0px;top:113.39px;font-size:12.3px;color:#303030;transform:scaleX(0.9022);transform-origin:0 0;">Suplementos</div>
<svg style="left:1288px;top:78px" width="36" height="32" viewBox="0 0 36 32"><defs><linearGradient id="cg1" x1="0" y1="0" x2="0" y2="1"><stop offset="0" stop-color="#18a0f5"/><stop offset=".55" stop-color="#3aaa5a"/><stop offset="1" stop-color="#f5cc00"/></linearGradient>
<linearGradient id="cg2" x1="0" y1="0" x2="0" y2="1"><stop offset="0" stop-color="#a855e8"/><stop offset=".5" stop-color="#ee4f95"/><stop offset="1" stop-color="#ff9a5a"/></linearGradient></defs>
<path d="M18 4 C21 4 23.5 5 24.5 8 L25.8 11.8 H19.5 Z" fill="#1d4fd8"/>
<path d="M10.5 21 H16.8 L16 29.5 C13.5 29.5 12 28.5 11.2 26.5 Z" fill="#f0552a"/>
<path d="M9.5 4 H21 C22.6 4 23.2 5.2 22.7 6.8 L17.2 20.8 C16.7 22 15.8 22.5 14.3 22.5 H6 C4.5 22.5 3.8 21.5 4.2 20 L7.8 6.2 C8.2 4.8 8.8 4 9.5 4 Z" fill="url(#cg1)"/>
<path d="M22.3 11.3 H29.6 C31.1 11.3 31.8 12.5 31.4 14 L27.4 27.8 C27 29 26 29.5 24.6 29.5 H16 L20.8 13 C21.2 11.9 21.6 11.3 22.3 11.3 Z" fill="url(#cg2)"/><path d="M21.3 11.8 L17.6 24" stroke="#fdfdfd" stroke-width="1.4"/></svg>
<div class="t" style="left:1286.7px;top:113.39px;font-size:12.3px;color:#303030;transform:scaleX(0.9557);transform-origin:0 0;">Copilot</div>
<svg style="left:1360px;top:84px" width="24" height="27" viewBox="0 0 24 27"><path d="M1 3 C1 1.8 1.8 1 3 1 H12.5 L18 6.5 V13" fill="none" stroke="#3a6fe0" stroke-width="1.3"/><path d="M1 3 V21 C1 22.2 1.8 23 3 23 H10" fill="none" stroke="#3a6fe0" stroke-width="1.3"/><path d="M12.5 1 V6.5 H18" fill="none" stroke="#3a6fe0" stroke-width="1.1"/><path d="M6 12 C7 10 8 7.5 8.5 5.5 C9 8 10.5 10.5 12.5 12 C10 11.5 8 12.5 6 14 Z" fill="none" stroke="#3a6fe0" stroke-width=".9"/><path d="M14 19.5 L19 14.5 C20 13.5 21.5 13.5 22.5 14.5 C23.5 15.5 23.5 17 22.5 18 L20.5 20" fill="none" stroke="#3a6fe0" stroke-width="1.4"/><path d="M17.5 16.5 L12.5 21.5 C11.5 22.5 11.5 24 12.5 25 C13.5 26 15 26 16 25 L18 23" fill="none" stroke="#3a6fe0" stroke-width="1.4"/><path d="M15.5 21 L19 17.5" stroke="#3a6fe0" stroke-width="1.4"/></svg>
<div class="t" style="left:1358.6px;top:113.39px;font-size:12.3px;color:#303030;transform:scaleX(0.8782);transform-origin:0 0;">Crie</div>
<div class="t" style="left:1349.0px;top:128.19px;font-size:12.3px;color:#303030;transform:scaleX(0.8535);transform-origin:0 0;">um PDF</div>
<div class="a" style="left:0;top:204px;width:1428px;height:18px;background:#f0f0f0"></div>
<div class="a" style="left:0;top:221px;width:1428px;height:1px;background:#bdbdbd"></div>
<svg style="left:0;top:204px" width="23" height="18"><path d="M8 15.5 L19.5 15.5 L19.5 4 Z" fill="#dedede"/></svg>
<div class="a" style="left:22.7px;top:204px;width:14.9px;height:17px;"></div>
<div class="a" style="left:37.1px;top:204px;width:1px;height:17px;background:#dadada"></div>
<div class="t ch" style="left:22.7px;width:14.9px;color:#555555">A</div>
<div class="a" style="left:37.6px;top:204px;width:120.7px;height:17px;"></div>
<div class="a" style="left:157.8px;top:204px;width:1px;height:17px;background:#dadada"></div>
<div class="t ch" style="left:37.6px;width:120.7px;color:#555555">B</div>
<div class="a" style="left:158.3px;top:204px;width:122.1px;height:17px;background:#e1e1e1;"></div>
<div class="a" style="left:279.9px;top:204px;width:1px;height:17px;background:#dadada"></div>
<div class="t ch" style="left:158.3px;width:122.1px;color:#1e6e3f">C</div>
<div class="a" style="left:158.3px;top:219.5px;width:122.1px;height:2.5px;background:#217a45"></div>
<div class="a" style="left:280.4px;top:204px;width:13.3px;height:17px;"></div>
<div class="a" style="left:293.2px;top:204px;width:1px;height:17px;background:#dadada"></div>
<div class="t ch" style="left:280.4px;width:13.3px;color:#555555">D</div>
<div class="a" style="left:293.7px;top:204px;width:121.8px;height:17px;"></div>
<div class="a" style="left:415.0px;top:204px;width:1px;height:17px;background:#dadada"></div>
<div class="t ch" style="left:293.7px;width:121.8px;color:#555555">E</div>
<div class="a" style="left:415.5px;top:204px;width:167.2px;height:17px;"></div>
<div class="a" style="left:582.2px;top:204px;width:1px;height:17px;background:#dadada"></div>
<div class="t ch" style="left:415.5px;width:167.2px;color:#555555">F</div>
<div class="a" style="left:582.7px;top:204px;width:14.0px;height:17px;"></div>
<div class="a" style="left:596.2px;top:204px;width:1px;height:17px;background:#dadada"></div>
<div class="t ch" style="left:582.7px;width:14.0px;color:#555555">G</div>
<div class="a" style="left:596.7px;top:204px;width:115.0px;height:17px;"></div>
<div class="a" style="left:711.2px;top:204px;width:1px;height:17px;background:#dadada"></div>
<div class="t ch" style="left:596.7px;width:115.0px;color:#555555">H</div>
<div class="a" style="left:711.7px;top:204px;width:13.9px;height:17px;"></div>
<div class="a" style="left:725.1px;top:204px;width:1px;height:17px;background:#dadada"></div>
<div class="t ch" style="left:711.7px;width:13.9px;color:#555555">I</div>
<div class="a" style="left:725.6px;top:204px;width:117.7px;height:17px;"></div>
<div class="a" style="left:842.8px;top:204px;width:1px;height:17px;background:#dadada"></div>
<div class="t ch" style="left:725.6px;width:117.7px;color:#555555">J</div>
<div class="a" style="left:843.3px;top:204px;width:60.4px;height:17px;"></div>
<div class="a" style="left:903.2px;top:204px;width:1px;height:17px;background:#dadada"></div>
<div class="t ch" style="left:843.3px;width:60.4px;color:#555555">K</div>
<div class="a" style="left:903.7px;top:204px;width:60.4px;height:17px;"></div>
<div class="a" style="left:963.6px;top:204px;width:1px;height:17px;background:#dadada"></div>
<div class="t ch" style="left:903.7px;width:60.4px;color:#555555">L</div>
<div class="a" style="left:964.1px;top:204px;width:60.4px;height:17px;"></div>
<div class="a" style="left:1024.0px;top:204px;width:1px;height:17px;background:#dadada"></div>
<div class="t ch" style="left:964.1px;width:60.4px;color:#555555">M</div>
<div class="a" style="left:1024.5px;top:204px;width:60.4px;height:17px;"></div>
<div class="a" style="left:1084.4px;top:204px;width:1px;height:17px;background:#dadada"></div>
<div class="t ch" style="left:1024.5px;width:60.4px;color:#555555">N</div>
<div class="a" style="left:1084.9px;top:204px;width:60.4px;height:17px;"></div>
<div class="a" style="left:1144.8px;top:204px;width:1px;height:17px;background:#dadada"></div>
<div class="t ch" style="left:1084.9px;width:60.4px;color:#555555">O</div>
<div class="a" style="left:1145.3px;top:204px;width:60.4px;height:17px;"></div>
<div class="a" style="left:1205.2px;top:204px;width:1px;height:17px;background:#dadada"></div>
<div class="t ch" style="left:1145.3px;width:60.4px;color:#555555">P</div>
<div class="a" style="left:1205.7px;top:204px;width:60.4px;height:17px;"></div>
<div class="a" style="left:1265.6px;top:204px;width:1px;height:17px;background:#dadada"></div>
<div class="t ch" style="left:1205.7px;width:60.4px;color:#555555">Q</div>
<div class="a" style="left:1266.1px;top:204px;width:60.4px;height:17px;"></div>
<div class="a" style="left:1326.0px;top:204px;width:1px;height:17px;background:#dadada"></div>
<div class="t ch" style="left:1266.1px;width:60.4px;color:#555555">R</div>
<div class="a" style="left:1326.5px;top:204px;width:60.4px;height:17px;"></div>
<div class="a" style="left:1386.4px;top:204px;width:1px;height:17px;background:#dadada"></div>
<div class="t ch" style="left:1326.5px;width:60.4px;color:#555555">S</div>
<div class="a" style="left:1386.9px;top:204px;width:60.4px;height:17px;"></div>
<div class="a" style="left:1446.8px;top:204px;width:1px;height:17px;background:#dadada"></div>
<div class="t ch" style="left:1386.9px;width:60.4px;color:#555555">T</div>
<div class="a" style="left:0;top:222px;width:23px;height:497px;background:#f0f0f0"></div>
<div class="a" style="left:22px;top:222px;width:1px;height:497px;background:#c8c8c8"></div>
<div class="a" style="left:0;top:239.1px;width:22px;height:1px;background:#dadada"></div>
<div class="t rh" style="top:224.9px;color:#555555">1</div>
<div class="a" style="left:0;top:292.9px;width:22px;height:1px;background:#dadada"></div>
<div class="t rh" style="top:278.7px;color:#555555">2</div>
<div class="a" style="left:0;top:328.1px;width:22px;height:1px;background:#dadada"></div>
<div class="t rh" style="top:313.9px;color:#555555">3</div>
<div class="a" style="left:0;top:346.2px;width:22px;height:1px;background:#dadada"></div>
<div class="t rh" style="top:332.0px;color:#555555">4</div>
<div class="a" style="left:0;top:364.2px;width:22px;height:1px;background:#dadada"></div>
<div class="t rh" style="top:350.0px;color:#555555">5</div>
<div class="a" style="left:0;top:382.3px;width:22px;height:1px;background:#dadada"></div>
<div class="t rh" style="top:368.1px;color:#555555">6</div>
<div class="a" style="left:0;top:400.4px;width:22px;height:1px;background:#dadada"></div>
<div class="t rh" style="top:386.2px;color:#555555">7</div>
<div class="a" style="left:0;top:418.4px;width:22px;height:1px;background:#dadada"></div>
<div class="t rh" style="top:404.2px;color:#555555">8</div>
<div class="a" style="left:0;top:418.9px;width:22px;height:18.1px;background:#e1e1e1"></div>
<div class="a" style="left:21px;top:418.9px;width:2px;height:18.1px;background:#217a45"></div>
<div class="a" style="left:0;top:436.5px;width:22px;height:1px;background:#dadada"></div>
<div class="t rh" style="top:422.3px;color:#1e6e3f">9</div>
<div class="a" style="left:0;top:454.6px;width:22px;height:1px;background:#dadada"></div>
<div class="t rh" style="top:440.4px;color:#555555">10</div>
<div class="a" style="left:0;top:472.7px;width:22px;height:1px;background:#dadada"></div>
<div class="t rh" style="top:458.5px;color:#555555">11</div>
<div class="a" style="left:0;top:490.7px;width:22px;height:1px;background:#dadada"></div>
<div class="t rh" style="top:476.5px;color:#555555">12</div>
<div class="a" style="left:0;top:508.8px;width:22px;height:1px;background:#dadada"></div>
<div class="t rh" style="top:494.6px;color:#555555">13</div>
<div class="a" style="left:0;top:526.9px;width:22px;height:1px;background:#dadada"></div>
<div class="t rh" style="top:512.7px;color:#555555">14</div>
<div class="a" style="left:0;top:544.9px;width:22px;height:1px;background:#dadada"></div>
<div class="t rh" style="top:530.7px;color:#555555">15</div>
<div class="a" style="left:0;top:563.0px;width:22px;height:1px;background:#dadada"></div>
<div class="t rh" style="top:548.8px;color:#555555">16</div>
<div class="a" style="left:0;top:581.1px;width:22px;height:1px;background:#dadada"></div>
<div class="t rh" style="top:566.9px;color:#555555">17</div>
<div class="a" style="left:0;top:599.2px;width:22px;height:1px;background:#dadada"></div>
<div class="t rh" style="top:585.0px;color:#555555">18</div>
<div class="a" style="left:0;top:617.2px;width:22px;height:1px;background:#dadada"></div>
<div class="t rh" style="top:603.0px;color:#555555">19</div>
<div class="a" style="left:0;top:635.3px;width:22px;height:1px;background:#dadada"></div>
<div class="t rh" style="top:621.1px;color:#555555">20</div>
<div class="a" style="left:0;top:653.4px;width:22px;height:1px;background:#dadada"></div>
<div class="t rh" style="top:639.2px;color:#555555">21</div>
<div class="a" style="left:0;top:671.4px;width:22px;height:1px;background:#dadada"></div>
<div class="t rh" style="top:657.2px;color:#555555">22</div>
<div class="a" style="left:0;top:689.5px;width:22px;height:1px;background:#dadada"></div>
<div class="t rh" style="top:675.3px;color:#555555">23</div>
<div class="a" style="left:0;top:707.6px;width:22px;height:1px;background:#dadada"></div>
<div class="t rh" style="top:693.4px;color:#555555">24</div>
<div class="a" style="left:0;top:725.6px;width:22px;height:1px;background:#dadada"></div>
<div class="t rh" style="top:711.4px;color:#555555">25</div>
<div class="a" style="left:23px;top:222px;width:1405px;height:497px;background:#fff"></div>
<div class="t" style="left:30.8px;top:233.5px;font-size:37px;font-weight:bold;color:#000;-webkit-text-stroke:0.7px #000;text-shadow:1px 1.5px 1.5px rgba(0,0,0,.28);transform:scaleX(1.044);transform-origin:0 0">Cadastros Compras</div>
<div class="a" style="left:37px;top:293px;width:244px;height:36px;background:#000"></div>
<div class="a" style="left:293px;top:293px;width:290px;height:36px;background:#000"></div>
<div class="a" style="left:596px;top:293px;width:116px;height:36px;background:#000"></div>
<div class="a" style="left:725px;top:293px;width:119px;height:36px;background:#000"></div>
<div class="t ht" style="left:37.6px;width:120.7px;top:303.95px"><span style="transform:scaleX(1.0)">Comprador</span></div>
<div class="t ht" style="left:158.3px;width:122.1px;top:303.95px"><span style="transform:scaleX(1.0)">Foto</span></div>
<div class="t ht" style="left:293.7px;width:121.8px;top:303.95px"><span style="transform:scaleX(1.0)">Fornecedor</span></div>
<div class="t ht" style="left:415.5px;width:167.2px;top:303.95px"><span style="transform:scaleX(1.0)">foto</span></div>
<div class="t ht" style="left:596.7px;width:115.0px;top:303.95px"><span style="transform:scaleX(1.0)">Setor</span></div>
<div class="t ht" style="left:725.6px;width:117.7px;top:303.95px"><span style="transform:scaleX(1.0)">Produto</span></div>
<div class="a" style="left:37px;top:346px;width:244px;height:1px;background:#2b2b2b"></div>
<div class="a" style="left:293px;top:346px;width:290px;height:1px;background:#2b2b2b"></div>
<div class="a" style="left:596px;top:346px;width:116px;height:1px;background:#2b2b2b"></div>
<div class="a" style="left:37px;top:364px;width:244px;height:1px;background:#2b2b2b"></div>
<div class="a" style="left:293px;top:364px;width:290px;height:1px;background:#2b2b2b"></div>
<div class="a" style="left:596px;top:364px;width:116px;height:1px;background:#2b2b2b"></div>
<div class="a" style="left:37px;top:382px;width:244px;height:1px;background:#2b2b2b"></div>
<div class="a" style="left:293px;top:382px;width:290px;height:1px;background:#2b2b2b"></div>
<div class="a" style="left:596px;top:382px;width:116px;height:1px;background:#2b2b2b"></div>
<div class="a" style="left:37px;top:400px;width:244px;height:1px;background:#2b2b2b"></div>
<div class="a" style="left:293px;top:400px;width:290px;height:1px;background:#2b2b2b"></div>
<div class="a" style="left:596px;top:400px;width:116px;height:1px;background:#2b2b2b"></div>
<div class="a" style="left:37px;top:418px;width:244px;height:1px;background:#2b2b2b"></div>
<div class="a" style="left:293px;top:418px;width:290px;height:1px;background:#2b2b2b"></div>
<div class="a" style="left:596px;top:418px;width:116px;height:1px;background:#2b2b2b"></div>
<div class="a" style="left:725px;top:346px;width:119px;height:1px;background:#2b2b2b"></div>
<div class="a" style="left:725px;top:364px;width:119px;height:1px;background:#2b2b2b"></div>
<div class="a" style="left:725px;top:382px;width:119px;height:1px;background:#2b2b2b"></div>
<div class="a" style="left:725px;top:400px;width:119px;height:1px;background:#2b2b2b"></div>
<div class="a" style="left:725px;top:418px;width:119px;height:1px;background:#2b2b2b"></div>
<div class="a" style="left:725px;top:437px;width:119px;height:1px;background:#2b2b2b"></div>
<div class="a" style="left:725px;top:455px;width:119px;height:1px;background:#2b2b2b"></div>
<div class="a" style="left:725px;top:473px;width:119px;height:1px;background:#2b2b2b"></div>
<div class="a" style="left:725px;top:491px;width:119px;height:1px;background:#2b2b2b"></div>
<div class="a" style="left:37px;top:329px;width:1px;height:90px;background:#2b2b2b"></div>
<div class="a" style="left:158px;top:329px;width:1px;height:90px;background:#2b2b2b"></div>
<div class="a" style="left:293px;top:329px;width:1px;height:90px;background:#2b2b2b"></div>
<div class="a" style="left:415px;top:329px;width:1px;height:90px;background:#2b2b2b"></div>
<div class="a" style="left:596px;top:329px;width:1px;height:90px;background:#2b2b2b"></div>
<div class="a" style="left:711px;top:329px;width:1px;height:90px;background:#2b2b2b"></div>
<div class="a" style="left:725px;top:329px;width:1px;height:163px;background:#2b2b2b"></div>
<div class="a" style="left:843px;top:329px;width:1px;height:163px;background:#2b2b2b"></div>
<div class="t cell" style="left:37.6px;width:120.7px;top:331.74px"><span>Michael B. Jordan</span></div>
<div class="t cell" style="left:37.6px;width:120.7px;top:349.81px"><span>Will Smith</span></div>
<div class="t cell" style="left:37.6px;width:120.7px;top:367.88px"><span>Zendaya Maree</span></div>
<div class="t cell" style="left:37.6px;width:120.7px;top:385.95px"><span>Tom Holland</span></div>
<div class="t cell" style="left:37.6px;width:120.7px;top:404.02px"><span>Ryan Reynolds</span></div>
<div class="t cell" style="left:293.7px;width:121.8px;top:331.74px"><span>Superstore</span></div>
<div class="t cell" style="left:293.7px;width:121.8px;top:349.81px"><span>Best Buy</span></div>
<div class="t cell" style="left:293.7px;width:121.8px;top:367.88px"><span>Walmart</span></div>
<div class="t cell" style="left:293.7px;width:121.8px;top:385.95px"><span>Costco</span></div>
<div class="t cell" style="left:293.7px;width:121.8px;top:404.02px"><span>IKEA</span></div>
<div class="t cell" style="left:596.7px;width:115.0px;top:331.74px"><span>Comercial</span></div>
<div class="t cell" style="left:596.7px;width:115.0px;top:349.81px"><span>Produção</span></div>
<div class="t cell" style="left:596.7px;width:115.0px;top:367.88px"><span>Manutenção</span></div>
<div class="t cell" style="left:596.7px;width:115.0px;top:385.95px"><span>RH</span></div>
<div class="t cell" style="left:596.7px;width:115.0px;top:404.02px"><span>Qualidade</span></div>
<div class="t cell" style="left:725.6px;width:117.7px;top:331.74px"><span>Algodão</span></div>
<div class="t cell" style="left:725.6px;width:117.7px;top:349.81px"><span>Poliéster</span></div>
<div class="t cell" style="left:725.6px;width:117.7px;top:367.88px"><span>Linho</span></div>
<div class="t cell" style="left:725.6px;width:117.7px;top:385.95px"><span>TNT</span></div>
<div class="t cell" style="left:725.6px;width:117.7px;top:404.02px"><span>Microfibra</span></div>
<div class="t cell" style="left:725.6px;width:117.7px;top:422.09px"><span>Malha</span></div>
<div class="t cell" style="left:725.6px;width:117.7px;top:440.16px"><span>Cetim</span></div>
<div class="t cell" style="left:725.6px;width:117.7px;top:458.23px"><span>Seda</span></div>
<div class="t cell" style="left:725.6px;width:117.7px;top:476.30px"><span>Veludo</span></div>
<div class="a" style="left:159px;top:329px;width:134px;height:17px;overflow:hidden"><div class="t lnk" style="left:-43.3px;top:3.66px;color:#467886;text-decoration-color:#46788680;transform:scaleX(1.025);transform-origin:0 0">planilhas.com/wp-content/uploads/2024/12/imagem.png</div></div>
<div class="a" style="left:159px;top:347px;width:134px;height:17px;overflow:hidden"><div class="t lnk" style="left:-43.3px;top:3.73px;color:#467886;text-decoration-color:#46788680;transform:scaleX(1.025);transform-origin:0 0">planilhas.com/wp-content/uploads/2024/12/imagem.png</div></div>
<div class="a" style="left:159px;top:365px;width:134px;height:17px;overflow:hidden"><div class="t lnk" style="left:-43.3px;top:3.80px;color:#467886;text-decoration-color:#46788680;transform:scaleX(1.025);transform-origin:0 0">planilhas.com/wp-content/uploads/2024/12/imagem.png</div></div>
<div class="a" style="left:159px;top:383px;width:134px;height:17px;overflow:hidden"><div class="t lnk" style="left:-43.3px;top:3.87px;color:#467886;text-decoration-color:#46788680;transform:scaleX(1.025);transform-origin:0 0">planilhas.com/wp-content/uploads/2024/12/imagem.png</div></div>
<div class="a" style="left:159px;top:401px;width:134px;height:17px;overflow:hidden"><div class="t lnk" style="left:-44.9px;top:3.94px;color:#467886;text-decoration-color:#46788680;transform:scaleX(1.025);transform-origin:0 0">lanilhas.com/wp-content/uploads/2024/12/imagem.png</div></div>
<div class="a" style="left:416px;top:329px;width:180px;height:17px;overflow:hidden"><div class="t lnk" style="left:-33.0px;top:3.66px;color:#96607d;text-decoration-color:#96607d80;transform:scaleX(1.025);transform-origin:0 0">planilhas.com/wp-content/uploads/2024/12/imagem.png</div></div>
<div class="a" style="left:416px;top:347px;width:180px;height:17px;overflow:hidden"><div class="t lnk" style="left:-58.1px;top:3.73px;color:#467886;text-decoration-color:#46788680;transform:scaleX(1.025);transform-origin:0 0">planilhas.com/wp-content/uploads/2024/12/imagem.png</div></div>
<div class="a" style="left:416px;top:365px;width:180px;height:17px;overflow:hidden"><div class="t lnk" style="left:-62.7px;top:3.80px;color:#467886;text-decoration-color:#46788680;transform:scaleX(1.025);transform-origin:0 0">planilhas.com/wp-content/uploads/2024/12/imagem.png</div></div>
<div class="a" style="left:416px;top:383px;width:180px;height:17px;overflow:hidden"><div class="t lnk" style="left:-22.3px;top:3.87px;color:#467886;text-decoration-color:#46788680;transform:scaleX(1.025);transform-origin:0 0">planilhas.com/wp-content/uploads/2024/12/imagem.png</div></div>
<div class="a" style="left:416px;top:401px;width:180px;height:17px;overflow:hidden"><div class="t lnk" style="left:-16.4px;top:3.94px;color:#467886;text-decoration-color:#46788680;transform:scaleX(1.025);transform-origin:0 0">planilhas.com/wp-content/uploads/2024/12/imagem.png</div></div>
<div class="a" style="left:158px;top:418px;width:123px;height:20px;border:2px solid #1d6b3b"></div>
<div class="a" style="left:278px;top:435px;width:6px;height:6px;background:#1d6b3b;border:1px solid #fff"></div>
<svg style="left:275px;top:413px" width="6" height="6"><path d="M6 0 L6 6 L0 6 L0 3 L3 3 L3 0 Z" fill="#3f50c0"/></svg>
<svg style="left:577px;top:413px" width="6" height="6"><path d="M6 0 L6 6 L0 6 L0 3 L3 3 L3 0 Z" fill="#3f50c0"/></svg>
<svg style="left:706px;top:413px" width="6" height="6"><path d="M6 0 L6 6 L0 6 L0 3 L3 3 L3 0 Z" fill="#3f50c0"/></svg>
<svg style="left:838px;top:486px" width="6" height="6"><path d="M6 0 L6 6 L0 6 L0 3 L3 3 L3 0 Z" fill="#3f50c0"/></svg>
<div class="a" style="left:1426px;top:204px;width:19px;height:515px;background:#e6ebe8"></div>
<div class="a" style="left:1428px;top:204.5px;width:15px;height:516px;background:#f5f5f5;border-radius:7.5px"></div>
<svg style="left:1431px;top:208px" width="10" height="8" viewBox="0 0 10 8"><path d="M0.5 7.2 L5 0.8 L9.5 7.2 Z" fill="#6e6e6e" stroke="#6e6e6e" stroke-width="1" stroke-linejoin="round"/></svg>
<div class="a" style="left:1431.5px;top:219.5px;width:8.5px;height:338.5px;background:#6e6e6e;border-radius:4.5px"></div>
<svg style="left:1431px;top:708px" width="10" height="8" viewBox="0 0 10 8"><path d="M0.5 0.8 L5 7.2 L9.5 0.8 Z" fill="#6e6e6e" stroke="#6e6e6e" stroke-width="1" stroke-linejoin="round"/></svg>
<div class="a" style="left:0;top:719px;width:1445px;height:30px;background:#e4e9e6"></div>
<div class="a" style="left:0;top:718px;width:1426px;height:8px;background:#fff"></div>
<div class="a" style="left:0;top:719px;width:103px;height:30px;background:#e2e9e5;border-top-right-radius:7px"></div>
<div class="a" style="left:179px;top:719px;width:1247px;height:30px;background:linear-gradient(90deg,#e6e6e6 0%,#e7e5e5 40%,#e5e8e6 60%,#e4e9e6 100%);border-top-left-radius:7px"></div>
<div class="a" style="left:103px;top:718px;width:76px;height:27px;background:#fff;border-radius:0 0 6px 6px"></div>
<svg style="left:20px;top:729px" width="8" height="10" viewBox="0 0 8 10"><path d="M6.5 0.8 L1.5 5 L6.5 9.2" fill="none" stroke="#8a8a8a" stroke-width="1.1"/></svg>
<svg style="left:51px;top:729px" width="8" height="10" viewBox="0 0 8 10"><path d="M1.5 0.8 L6.5 5 L1.5 9.2" fill="none" stroke="#8a8a8a" stroke-width="1.1"/></svg>
<div class="t" style="left:111.4px;top:726.16px;font-size:12.8px;color:#1f1f1f;font-weight:bold;transform:scaleX(0.9577);transform-origin:0 0;">Cadastros</div>
<div class="a" style="left:111px;top:741.5px;width:60.5px;height:2px;background:#0e7a3b"></div>
<div class="a" style="left:182.5px;top:725px;width:1px;height:18px;background:#cfcfcf"></div>
<div class="t" style="left:198.8px;top:728.15px;font-size:14px;color:#424242;transform:scaleX(0.9094);transform-origin:0 0;">Lançamentos</div>
<div class="a" style="left:287px;top:725px;width:1px;height:18px;background:#cfcfcf"></div>
<svg style="left:327px;top:727.5px" width="12" height="12" viewBox="0 0 12 12"><path d="M5.7 0.5 V11.2 M0.5 5.8 H11" stroke="#424242" stroke-width="1.3"/></svg>
<div class="a" style="left:867.5px;top:729px;width:2.4px;height:2.4px;border-radius:50%;background:#242424"></div>
<div class="a" style="left:867.5px;top:733px;width:2.4px;height:2.4px;border-radius:50%;background:#242424"></div>
<div class="a" style="left:867.5px;top:737px;width:2.4px;height:2.4px;border-radius:50%;background:#242424"></div>
<div class="a" style="left:884px;top:726px;width:543px;height:15.5px;background:#f5f5f5;border-radius:8px"></div>
<svg style="left:888px;top:730px" width="8" height="9" viewBox="0 0 8 9"><path d="M7 0.8 L1 4.5 L7 8.2 Z" fill="#6e6e6e" stroke="#6e6e6e" stroke-linejoin="round"/></svg>
<div class="a" style="left:900px;top:729px;width:319.5px;height:9px;background:#6e6e6e;border-radius:4.5px"></div>
<svg style="left:1415px;top:730px" width="8" height="9" viewBox="0 0 8 9"><path d="M1 0.8 L7 4.5 L1 8.2 Z" fill="#6e6e6e" stroke="#6e6e6e" stroke-linejoin="round"/></svg>
<div class="a" style="left:0;top:749px;width:1445px;height:16px;background:#f3f3f3"></div>
<div class="t" style="left:7.6px;top:754.57px;font-size:11.5px;color:#424242;transform:scaleX(0.8594);transform-origin:0 0;">Pronto</div>
<svg style="left:55px;top:753px" width="16" height="13" viewBox="0 0 16 13"><path d="M0.6 0.6 H13.4 V9" fill="none" stroke="#424242" stroke-width="1.1"/><path d="M0.6 0.6 V12.4 H6" fill="none" stroke="#424242" stroke-width="1.1"/><path d="M0.6 3 H13.4" stroke="#424242" stroke-width="1.1"/><path d="M3 5.5 H7 M3 8 H6" stroke="#424242" stroke-width="1"/><circle cx="11" cy="10.5" r="3.6" fill="#f3f3f3" stroke="#424242" stroke-width="1.1"/><circle cx="11" cy="10.5" r="1.5" fill="#424242"/></svg>
<svg style="left:85px;top:752px" width="15" height="14" viewBox="0 0 15 14"><circle cx="7" cy="2.2" r="1.8" fill="none" stroke="#424242" stroke-width="1"/><path d="M1 4.5 L7 5.5 L13 4.5 M7 5.5 V9 L4 13.5 M7 9 L10 13.5" fill="none" stroke="#424242" stroke-width="1.1"/></svg>
<div class="t" style="left:103.1px;top:754.57px;font-size:11.5px;color:#242424;font-weight:bold;transform:scaleX(0.8279);transform-origin:0 0;">Acessibilidade: investigar</div>
<svg style="left:1040px;top:752px" width="14" height="13" viewBox="0 0 14 13"><path d="M10 8 H0.6 V0.6 H12.4 V5" fill="none" stroke="#424242" stroke-width="1.1"/><path d="M4 11 H7" stroke="#424242" stroke-width="1.1"/><circle cx="10.5" cy="10" r="2.5" fill="none" stroke="#424242" stroke-width="1.2" stroke-dasharray="1.4 .8"/></svg>
<div class="t" style="left:1055.9px;top:754.77px;font-size:11.5px;color:#242424;transform:scaleX(0.8484);transform-origin:0 0;">Exibir Configurações</div>
<div class="a" style="left:1164.5px;top:749.5px;width:37px;height:16px;background:#e0e0e0;border-radius:3px 3px 0 0"></div>
<svg style="left:1176px;top:752px" width="14" height="14" viewBox="0 0 14 14"><path d="M0.6 0.6 H12.4 V13 H0.6 Z M0.6 4.5 H12.4 M0.6 8.5 H12.4 M4.5 0.6 V13 M8.5 0.6 V13" fill="none" stroke="#424242" stroke-width="1.1"/></svg>
<svg style="left:1214px;top:752px" width="14" height="14" viewBox="0 0 14 14"><path d="M0.6 0.6 H12.4 V13 H0.6 Z" fill="none" stroke="#424242" stroke-width="1.1"/><path d="M2.6 2.6 H10.4 V13" fill="none" stroke="#424242" stroke-width="1"/><path d="M4.5 5 H8.5 M4.5 7 H8.5 M4.5 9 H8.5" stroke="#424242" stroke-width=".9"/></svg>
<svg style="left:1251px;top:752px" width="15" height="14" viewBox="0 0 15 14"><path d="M0.6 13 V0.6 H13.4 V13" fill="none" stroke="#424242" stroke-width="1.1"/><path d="M4.5 0.6 V7.5 H9.5 V0.6" fill="none" stroke="#424242" stroke-width="1.1"/></svg>
<div class="a" style="left:1283.5px;top:759px;width:7px;height:1.1px;background:#424242"></div>
<div class="a" style="left:1295px;top:759px;width:93px;height:1px;background:#8a8a8a"></div>
<div class="a" style="left:1340px;top:753px;width:3.5px;height:12px;background:#5c5c5c"></div>
<svg style="left:1393px;top:754px" width="10" height="10" viewBox="0 0 10 10"><path d="M4.8 0.5 V9.5 M0.3 5 H9.3" stroke="#424242" stroke-width="1.1"/></svg>
<div class="t" style="left:1413.0px;top:755.19px;font-size:11px;color:#424242;transform:scaleX(0.8524);transform-origin:0 0;">100%</div>
</body></html>
